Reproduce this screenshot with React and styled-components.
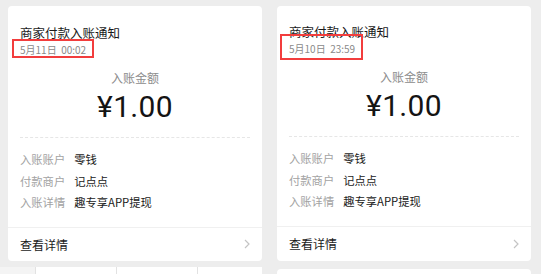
import React from "react";
import styled, { createGlobalStyle } from "styled-components";

const GlobalStyle = createGlobalStyle`
  html, body {
    margin: 0;
    padding: 0;
    background: #ededed;
    overflow: hidden;
  }
  body {
    font-family: "Noto Sans CJK SC", "Noto Sans", sans-serif;
    color: #1a1a1a;
  }
`;

const Feed = styled.div`
  display: flex;
  gap: 15px;
  padding-left: 8px;
  width: 541px;
  height: 274px;
  overflow: hidden;
  box-sizing: border-box;
`;

const Column = styled.div`
  display: flex;
  flex-direction: column;
  gap: ${(p) => p.$gap}px;
  padding-top: ${(p) => p.$top}px;
  width: 254px;
  flex: none;
`;

const PrevEdge = styled.div`
  height: 1px;
  background: #fff;
  border-radius: 0 0 3px 3px;
`;

const Card = styled.div`
  position: relative;
  background: #fff;
  border-radius: 4px;
  height: ${(p) => p.$height}px;
  flex: none;
  display: flex;
  flex-direction: column;
`;

const Header = styled.div`
  padding: ${(p) => p.$top}px 12px 0;
`;

const Title = styled.div`
  font-size: 12.5px;
  line-height: 16px;
  color: #1a1a1a;
  white-space: nowrap;
`;

const DateLine = styled.div`
  margin-top: 2px;
  font-size: 10px;
  line-height: 13px;
  color: #8a8a8a;
  white-space: pre;
`;

const Mark = styled.div`
  position: absolute;
  left: ${(p) => p.$x}px;
  top: ${(p) => p.$y}px;
  width: ${(p) => p.$w}px;
  height: ${(p) => p.$h}px;
  border: 2px solid #f23d3d;
  box-sizing: border-box;
  pointer-events: none;
`;

const Amount = styled.div`
  display: flex;
  flex-direction: column;
  align-items: center;
  margin-top: 14px;
`;

const AmountLabel = styled.div`
  font-size: 12px;
  line-height: 16px;
  color: #8c8c8c;
`;

const AmountValue = styled.div`
  margin-top: 3px;
  font-family: Roboto, "Noto Sans", sans-serif;
  font-size: 30px;
  line-height: 36px;
  color: #141414;
  letter-spacing: 0.3px;
`;

const Dashed = styled.div`
  margin: 12px 12px 0;
  border-top: 1px dashed #e6e6e6;
`;

const Rows = styled.div`
  display: flex;
  flex-direction: column;
  padding: 11px 12px 13px;
`;

const Row = styled.div`
  display: flex;
  gap: 9px;
  font-size: 11.3px;
  line-height: 21.5px;
  white-space: nowrap;
`;

const RowLabel = styled.span`
  color: #a3a3a3;
  flex: none;
`;

const RowValue = styled.span`
  color: #1a1a1a;
`;

const Footer = styled.div`
  border-top: 1px solid #f0f0f0;
  flex: 1;
  display: flex;
  align-items: center;
  justify-content: space-between;
  padding: 0 12px;
  font-size: 12px;
  color: #1a1a1a;
`;

const BottomStrip = styled.div`
  display: flex;
  margin-left: -8px;
  height: 8px;
  width: 262px;
  flex: none;
`;

const Cell = styled.div`
  width: ${(p) => p.$w}px;
  flex: ${(p) => (p.$w ? "none" : 1)};
  background: ${(p) => (p.$dim ? "#f4f4f4" : "#fff")};
  border-left: ${(p) => (p.$first ? "none" : "1px solid #e2e2e2")};
`;

const NextCard = styled.div`
  height: 10px;
  background: #fff;
  border-radius: 4px 4px 0 0;
  flex: none;
`;

const Chevron = () => (
  <svg width="6" height="10" viewBox="0 0 6 10" fill="none">
    <path d="M1 1l4 4-4 4" stroke="#c4c4c4" strokeWidth="1.2" />
  </svg>
);

const NoticeCard = ({ date, mark, headTop, height }) => (
  <Card $height={height}>
    <Header $top={headTop}>
      <Title>商家付款入账通知</Title>
      <DateLine>{date}</DateLine>
    </Header>
    <Amount>
      <AmountLabel>入账金额</AmountLabel>
      <AmountValue>¥1.00</AmountValue>
    </Amount>
    <Dashed />
    <Rows>
      <Row>
        <RowLabel>入账账户</RowLabel>
        <RowValue>零钱</RowValue>
      </Row>
      <Row>
        <RowLabel>付款商户</RowLabel>
        <RowValue>记点点</RowValue>
      </Row>
      <Row>
        <RowLabel>入账详情</RowLabel>
        <RowValue>趣专享APP提现</RowValue>
      </Row>
    </Rows>
    <Footer>
      <span>查看详情</span>
      <Chevron />
    </Footer>
    <Mark $x={mark.x} $y={mark.y} $w={mark.w} $h={mark.h} />
  </Card>
);

export default function App() {
  return (
    <>
      <GlobalStyle />
      <Feed>
        <Column $gap={6} $top={0}>
          <PrevEdge />
          <NoticeCard
            date="5月11日  00:02"
            headTop={19}
            height={255}
            mark={{ x: 4, y: 33, w: 82, h: 19 }}
          />
          <BottomStrip>
            <Cell $first $w={35} $dim />
            <Cell $w={80} />
            <Cell $w={80} />
            <Cell />
          </BottomStrip>
        </Column>
        <Column $gap={8} $top={6}>
          <NoticeCard
            date="5月10日  23:59"
            headTop={18}
            height={255}
            mark={{ x: 3, y: 28, w: 83, h: 26 }}
          />
          <NextCard />
        </Column>
      </Feed>
    </>
  );
}
